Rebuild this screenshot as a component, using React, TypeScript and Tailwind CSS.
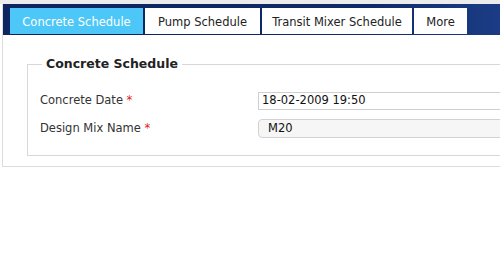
export default function App() {
  const tabs = [
    { label: 'Concrete Schedule', w: 'w-[133px]' },
    { label: 'Pump Schedule', w: 'w-[115px]' },
    { label: 'Transit Mixer Schedule', w: 'w-[150px]' },
    { label: 'More', w: 'w-[53px]' },
  ];

  return (
    <div className="w-[500px] h-[260px] overflow-hidden bg-white font-['DejaVu_Sans',sans-serif] text-[11.5px] text-[#333]">
      <div className="bg-[#ececec] h-[4px]" />
      <div className="ml-[2px] border-l border-b border-[#dcdcdc] w-[520px] bg-white">
        {/* tab strip */}
        <div className="flex items-end gap-[2px] h-[31px] pl-[7px] bg-[linear-gradient(90deg,#0d2560_0%,#0f2a68_70%,#1d3f8a_100%)]">
          {tabs.map((t, i) => (
            <div
              key={t.label}
              className={`${t.w} h-[26px] pt-[3px] flex items-center justify-center mb-[1px] whitespace-nowrap ${
                i === 0 ? 'bg-[#4cc7f7] text-white' : 'bg-white text-[#222]'
              }`}
            >
              {t.label}
            </div>
          ))}
        </div>

        {/* form */}
        <div className="pt-[20px] pb-[10px] pl-[24px]">
          <fieldset className="border border-[#d8d8d8] pl-[12px] pb-[17px] pt-[18px]">
            <legend className="px-[4px] ml-[2px] text-[12.5px] font-bold text-[#222]">Concrete Schedule</legend>
            <div className="flex flex-col gap-[9px]">
              <div className="flex items-center">
                <div className="w-[218px]">
                  Concrete Date <span className="text-[#e02020]">*</span>
                </div>
                <div className="h-[18px] w-[260px] border border-[#cfcfcf] flex items-center pl-[3px] text-[#111]">
                  18-02-2009 19:50
                </div>
              </div>
              <div className="flex items-center">
                <div className="w-[218px]">
                  Design Mix Name <span className="text-[#e02020]">*</span>
                </div>
                <div className="h-[19px] w-[260px] border border-[#d2d2d2] rounded-[4px] bg-[#f6f6f6] flex items-center pl-[9px] text-[#111]">
                  M20
                </div>
              </div>
            </div>
          </fieldset>
        </div>
      </div>
    </div>
  );
}
